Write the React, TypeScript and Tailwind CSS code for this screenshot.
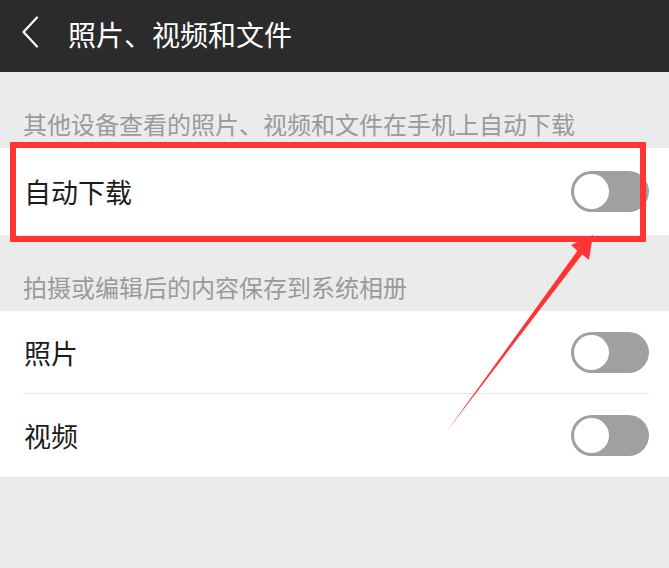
import React from "react";

const font = { fontFamily: '"Noto Sans CJK SC", "Noto Sans", sans-serif' };

function Toggle() {
  return (
    <div className="relative h-[41px] w-[78px] rounded-full bg-[#a0a0a0]">
      <div className="absolute left-[3px] top-[3px] h-[35px] w-[35px] rounded-full bg-white" />
    </div>
  );
}

function Row({ label, divider }: { label: string; divider?: boolean }) {
  return (
    <div className="relative flex items-center justify-between bg-white pl-[24px] pr-[20px]">
      <span className="text-[27px] leading-none text-[#1c1c1c]">{label}</span>
      <Toggle />
      {divider && (
        <div className="absolute bottom-0 left-[23px] right-[20px] h-px bg-[#e6e6e6]" />
      )}
    </div>
  );
}

function SectionTitle({ text }: { text: string }) {
  return (
    <div className="flex h-[76px] items-end pb-[9px] pl-[23px]">
      <span className="text-[24px] leading-[30px] text-[#9a9a9a]">{text}</span>
    </div>
  );
}

export default function App() {
  return (
    <div className="relative h-[568px] w-[669px] overflow-hidden bg-[#ebebeb]" style={font}>
      {/* Header */}
      <div className="flex h-[72px] items-center bg-[#2b2b2b] pl-[21px]">
        <svg className="mb-[9px]" width="18" height="32" viewBox="0 0 18 32" fill="none">
          <polyline points="16,1.5 2.5,16 16,30.5" stroke="#fff" strokeWidth="2.2" strokeLinecap="round" strokeLinejoin="round" />
        </svg>
        <span className="ml-[29px] mb-[5px] text-[28px] leading-none text-white">照片、视频和文件</span>
      </div>

      <SectionTitle text="其他设备查看的照片、视频和文件在手机上自动下载" />
      <div className="h-[87px] [&>div]:h-full">
        <Row label="自动下载" />
      </div>

      <SectionTitle text="拍摄或编辑后的内容保存到系统相册" />
      <div className="flex flex-col">
        <div className="h-[83px] [&>div]:h-full">
          <Row label="照片" divider />
        </div>
        <div className="h-[83px] [&>div]:h-full">
          <Row label="视频" />
        </div>
      </div>

      {/* annotation box */}
      <div className="pointer-events-none absolute left-[10px] top-[142px] h-[100px] w-[636px] border-[6px] border-[#ff3434]" />

      {/* annotation arrow */}
      <svg className="pointer-events-none absolute left-0 top-0" width="669" height="568" viewBox="0 0 669 568">
        <polygon
          points="447,431 577.4,250.8 571,245 593,235 589,260 582.2,254.4"
          fill="#ff3434"
        />
      </svg>
    </div>
  );
}
